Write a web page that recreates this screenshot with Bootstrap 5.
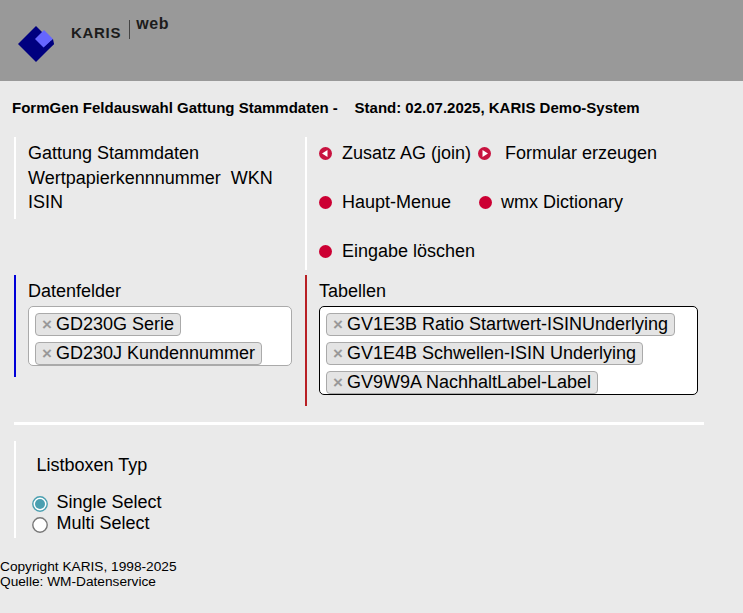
<!DOCTYPE html>
<html lang="de">
<head>
<meta charset="utf-8">
<title>FormGen</title>
<link href="https://cdn.jsdelivr.net/npm/bootstrap@5.3.0/dist/css/bootstrap.min.css" rel="stylesheet">
<style>
html,body{background:#eaeaea;}
body{font-family:"Liberation Sans",Arial,sans-serif;color:#000;font-size:18px;line-height:1.25;width:743px;height:613px;overflow:hidden;}
.top-band{height:81px;background:#999;}
.logo-mark{margin:25px 0 0 17px;width:38px;height:38px;flex:none;}
.logo-name{margin:25px 0 0 16px;font-size:15px;font-weight:700;letter-spacing:.7px;color:#1c1c1c;height:16px;line-height:16px;}
.logo-rule{width:1px;height:19px;background:#444;margin:20px 0 0 8px;}
.logo-web{margin:16px 0 0 6px;font-size:16px;font-weight:700;letter-spacing:.6px;color:#1c1c1c;line-height:16px;height:16px;}
.page-title{font-size:15px;font-weight:700;margin:19px 0 0 12px;height:16px;line-height:16px;white-space:pre;}
.wrap{margin-left:14px;width:690px;}
.upper-row{margin-top:21px;}
.cell-left{width:291px;flex:none;}
.cell-right{width:399px;flex:none;}
.bar{border-left:2px solid #fff;}
.bar-blue{border-left:2px solid #0000d8;}
.bar-red{border-left:2px solid #b81f24;}
.info{height:82px;padding:4px 0 0 12px;line-height:24.5px;}
.actions{height:133px;padding:4px 0 0 12px;}
.act-line{height:49px;line-height:24px;display:flex;align-items:flex-start;}
.act-dot{width:13px;height:13px;margin-top:6px;flex:none;}
.act-label{margin-left:10px;}
.act-second{margin-left:7px;}
.act-after{margin-left:14px;}
.act-gap{margin-left:28px;}
.act-wmx{margin-left:9px;}
.second-row{margin-top:5px;}
.fields-left{height:102px;padding:5px 0 0 12px;}
.fields-right{height:131px;padding:5px 0 0 12px;}
.cap{height:22px;line-height:22px;margin-bottom:4px;}
.pick{background:#fff;border:1px solid #aaa;border-radius:5px;padding:0 6px;width:264px;height:60px;overflow:hidden;}
.pick-dark{border-color:#000;width:379px;height:89px;}
.chip{display:table;height:23px;margin-top:6px;background:#e4e4e4;border:1px solid #aaa;border-radius:4px;line-height:21px;padding:0 6px 0 5px;white-space:nowrap;}
.chip-x{display:inline-block;line-height:1;color:#999;font-weight:700;font-size:17px;margin:0 4px 0 1px;}
.rule-white{height:3px;background:#fff;margin-top:16px;}
.listbox-part{margin-top:16px;height:97px;padding:14px 0 0 20.5px;}
.lb-title{line-height:20px;height:20px;margin-bottom:17px;}
.lb-opt{height:21px;line-height:21px;position:relative;padding-left:20px;}
.lb-radio{position:absolute;left:-5px;top:4px;width:16px;height:16px;}
.foot-text{margin-top:21px;font-size:13.7px;line-height:15px;}
</style>
</head>
<body>
<div class="top-band d-flex">
  <svg class="logo-mark" viewBox="0 0 38 38"><polygon points="19,1 37,19 19,37 1,19" fill="#00007f"/><polygon points="27,5 36,14 27,23 18,14" fill="#6666ff"/><polygon points="36,14 37,19 27,28 26,23" fill="#00007f"/></svg>
  <div class="logo-name">KARIS</div>
  <div class="logo-rule"></div>
  <div class="logo-web">web</div>
</div>
<div class="page-title">FormGen Feldauswahl Gattung Stammdaten -    Stand: 02.07.2025, KARIS Demo-System</div>
<div class="wrap">
  <div class="d-flex upper-row">
    <div class="cell-left"><div class="bar info">Gattung Stammdaten<br>Wertpapierkennnummer&nbsp; WKN<br>ISIN</div></div>
    <div class="cell-right"><div class="bar actions">
      <div class="act-line">
        <svg class="act-dot" viewBox="0 0 13 13"><circle cx="6.5" cy="6.5" r="6.5" fill="#c8123f"/><polygon points="3,6.5 8.5,3 8.5,10" fill="#fff"/></svg>
        <span class="act-label">Zusatz AG (join)</span>
        <svg class="act-dot act-second" viewBox="0 0 13 13"><circle cx="6.5" cy="6.5" r="6.5" fill="#c8123f"/><polygon points="10,6.5 4.5,3 4.5,10" fill="#fff"/></svg>
        <span class="act-after">Formular erzeugen</span>
      </div>
      <div class="act-line">
        <svg class="act-dot" viewBox="0 0 13 13"><circle cx="6.5" cy="6.5" r="6.5" fill="#cc0033"/></svg>
        <span class="act-label">Haupt-Menue</span>
        <svg class="act-dot act-gap" viewBox="0 0 13 13"><circle cx="6.5" cy="6.5" r="6.5" fill="#cc0033"/></svg>
        <span class="act-wmx">wmx Dictionary</span>
      </div>
      <div class="act-line">
        <svg class="act-dot" viewBox="0 0 13 13"><circle cx="6.5" cy="6.5" r="6.5" fill="#cc0033"/></svg>
        <span class="act-label">Eingabe löschen</span>
      </div>
    </div></div>
  </div>
  <div class="d-flex second-row">
    <div class="cell-left"><div class="bar-blue fields-left">
      <div class="cap">Datenfelder</div>
      <div class="pick">
        <div class="chip"><span class="chip-x">×</span>GD230G Serie</div>
        <div class="chip"><span class="chip-x">×</span>GD230J Kundennummer</div>
      </div>
    </div></div>
    <div class="cell-right"><div class="bar-red fields-right">
      <div class="cap">Tabellen</div>
      <div class="pick pick-dark">
        <div class="chip"><span class="chip-x">×</span>GV1E3B Ratio Startwert-ISINUnderlying</div>
        <div class="chip"><span class="chip-x">×</span>GV1E4B Schwellen-ISIN Underlying</div>
        <div class="chip"><span class="chip-x">×</span>GV9W9A NachhaltLabel-Label</div>
      </div>
    </div></div>
  </div>
  <div class="rule-white"></div>
  <div class="bar listbox-part">
    <div class="lb-title">Listboxen Typ</div>
    <div class="lb-opt"><svg class="lb-radio" viewBox="0 0 16 16"><circle cx="8" cy="8" r="7.2" fill="#fff" stroke="#4a9fb0" stroke-width="1.4"/><circle cx="8" cy="8" r="5" fill="#4a9fb0"/></svg>Single Select</div>
    <div class="lb-opt"><svg class="lb-radio" viewBox="0 0 16 16"><circle cx="8" cy="8" r="7.2" fill="#fff" stroke="#777" stroke-width="1.4"/></svg>Multi Select</div>
  </div>
</div>
<div class="foot-text">Copyright KARIS, 1998-2025<br>Quelle: WM-Datenservice</div>
<script src="https://cdn.jsdelivr.net/npm/bootstrap@5.3.0/dist/js/bootstrap.bundle.min.js"></script>
</body>
</html>
